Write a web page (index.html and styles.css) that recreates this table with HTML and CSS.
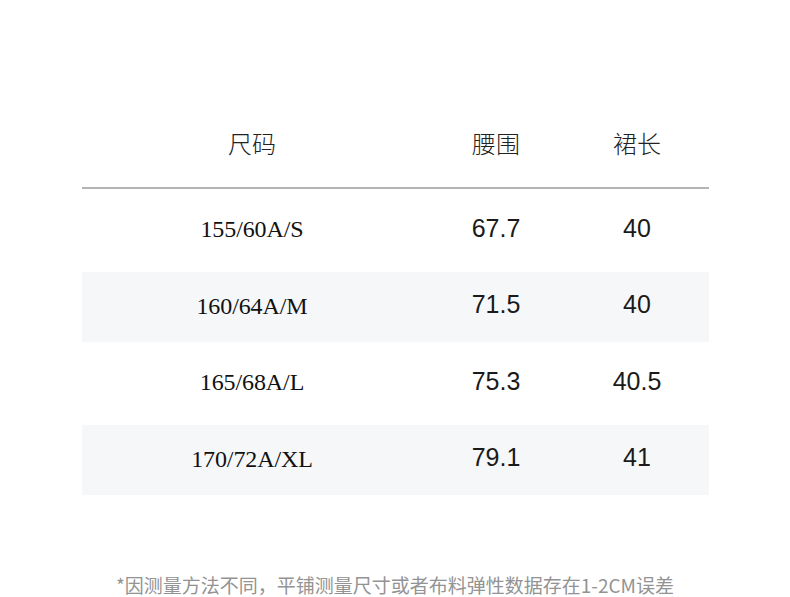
FILE: index.html
```html
<!DOCTYPE html>
<html lang="zh">
<head>
<meta charset="utf-8">
<link rel="stylesheet" href="styles.css">
</head>
<body>
<div class="page">
  <div class="table">
    <div class="row head">
      <div class="cell">尺码</div>
      <div class="cell">腰围</div>
      <div class="cell">裙长</div>
    </div>
    <div class="row tall">
      <div class="cell size">155/60A/S</div>
      <div class="cell num">67.7</div>
      <div class="cell num">40</div>
    </div>
    <div class="row short shade">
      <div class="cell size">160/64A/M</div>
      <div class="cell num">71.5</div>
      <div class="cell num">40</div>
    </div>
    <div class="row tall">
      <div class="cell size">165/68A/L</div>
      <div class="cell num">75.3</div>
      <div class="cell num">40.5</div>
    </div>
    <div class="row short shade">
      <div class="cell size">170/72A/XL</div>
      <div class="cell num">79.1</div>
      <div class="cell num">41</div>
    </div>
  </div>
  <p class="note">*因测量方法不同，平铺测量尺寸或者布料弹性数据存在1-2CM误差</p>
</div>
</body>
</html>
```

FILE: styles.css
```css
html, body {
  margin: 0;
  padding: 0;
  background: #ffffff;
}
.page {
  width: 790px;
  height: 597px;
  overflow: hidden;
  font-family: "Noto Sans CJK SC", "Noto Sans", sans-serif;
}
.table {
  margin: 105px 0 0 82px;
  width: 627px;
}
.row {
  display: grid;
  grid-template-columns: 340px 148px 134px 5px;
  align-items: center;
}
.cell {
  text-align: center;
  color: #222;
}
.head {
  height: 82px;
  border-bottom: 2px solid #b4b4b4;
  box-sizing: content-box;
}
.head .cell {
  font-family: "Noto Sans CJK SC", sans-serif;
  font-weight: 300;
  font-size: 24px;
  color: #222;
  margin-top: -7px;
}
.tall { height: 83px; }
.short { height: 70px; }
.shade { background: #f6f7f9; }
.size {
  font-family: "Liberation Serif", serif;
  font-size: 24px;
  letter-spacing: -0.1px;
  color: #111;
  margin-top: -2px;
}
.num {
  font-family: "Liberation Sans", Arial, sans-serif;
  font-size: 25px;
  color: #1a1a1a;
  margin-top: -6px;
}
.tall .num { margin-top: -5px; }
.note {
  margin: 77px 0 0 0;
  text-align: center;
  font-family: "Noto Sans CJK SC", sans-serif;
  font-size: 19px;
  line-height: 26px;
  color: #939393;
}
```
